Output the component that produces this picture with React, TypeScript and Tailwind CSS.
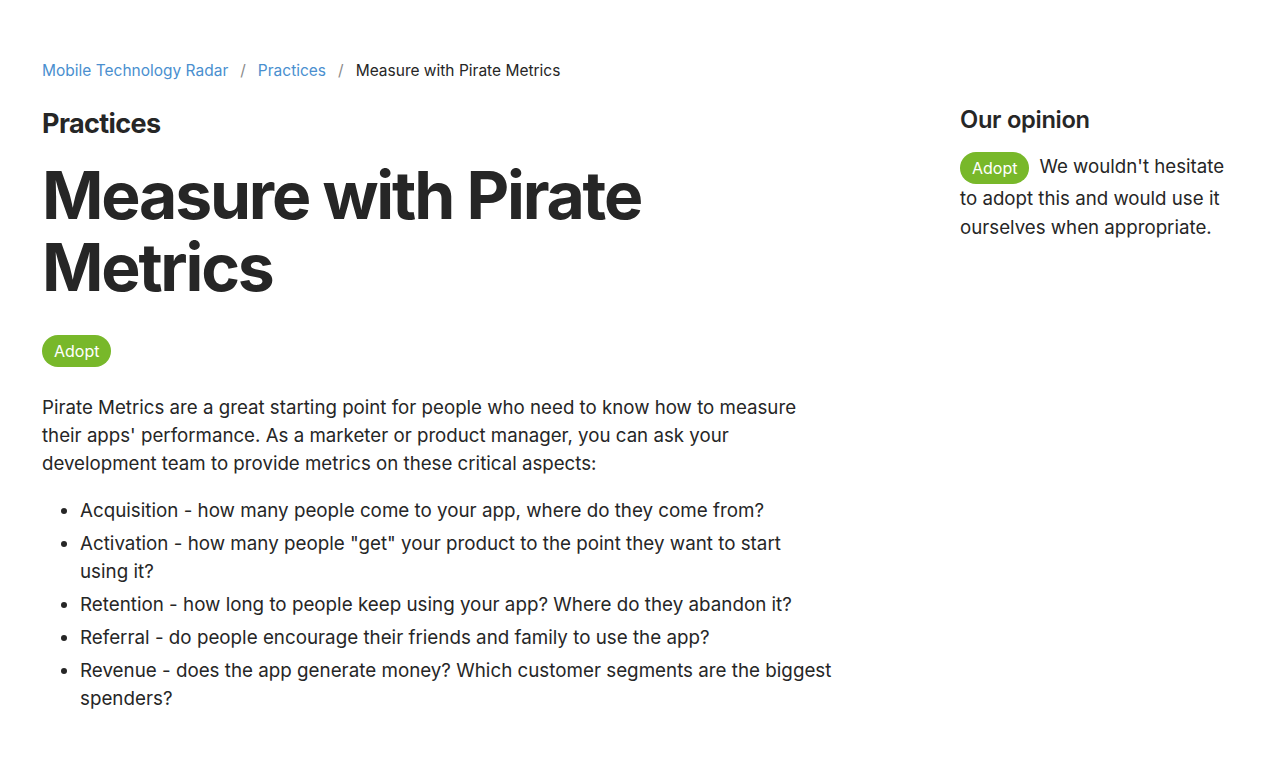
import React from "react";

const font = { fontFamily: "Inter, 'Noto Sans', sans-serif" };

function Badge({ children }: { children: React.ReactNode }) {
  return (
    <span className="inline-flex h-8 items-center rounded-full bg-[#78b82a] px-3 align-middle text-[16px] leading-8 text-white">
      {children}
    </span>
  );
}

const items = [
  "Acquisition - how many people come to your app, where do they come from?",
  'Activation - how many people "get" your product to the point they want to start using it?',
  "Retention - how long to people keep using your app? Where do they abandon it?",
  "Referral - do people encourage their friends and family to use the app?",
  "Revenue - does the app generate money? Which customer segments are the biggest spenders?",
];

export default function App() {
  return (
    <div className="min-h-screen bg-white text-[#262626]" style={font}>
      <div className="flex gap-[127px] px-[42px] pt-[59px]">
        {/* main column */}
        <main className="w-[791px] shrink-0">
          <nav className="flex items-center text-[15.5px] leading-6">
            <span className="text-[#4a8fcf]">Mobile Technology Radar</span>
            <span className="mx-3 text-[#8a8a8a]">/</span>
            <span className="text-[#4a8fcf]">Practices</span>
            <span className="mx-3 text-[#8a8a8a]">/</span>
            <span>Measure with Pirate Metrics</span>
          </nav>
          <h2 className="mt-[23px] text-[27px] font-bold leading-9 tracking-[-0.6px]">Practices</h2>
          <h1 className="mt-[17px] w-[640px] text-[66px] font-bold leading-[72px] tracking-[-2.2px]">
            Measure with Pirate Metrics
          </h1>
          <div className="mt-[32px]">
            <Badge>Adopt</Badge>
          </div>
          <p className="mt-[27px] text-[18.7px] leading-7">
            Pirate Metrics are a great starting point for people who need to know how to measure
            their apps' performance. As a marketer or product manager, you can ask your
            development team to provide metrics on these critical aspects:
          </p>
          <ul className="mt-[19px] list-disc pl-[38px] text-[18.8px] leading-7">
            {items.map((t) => (
              <li key={t} className="mb-[5px]">
                {t}
              </li>
            ))}
          </ul>
        </main>
        {/* side column */}
        <aside className="w-[270px] pt-[45px]">
          <h3 className="text-[23.7px] font-semibold leading-8 tracking-[-0.3px]">Our opinion</h3>
          <p className="mt-[16px] text-[18.7px] leading-[29px]">
            <Badge>Adopt</Badge>
            <span className="ml-[10px]">We wouldn't hesitate to adopt this and would use it ourselves when appropriate.</span>
          </p>
        </aside>
      </div>
    </div>
  );
}
